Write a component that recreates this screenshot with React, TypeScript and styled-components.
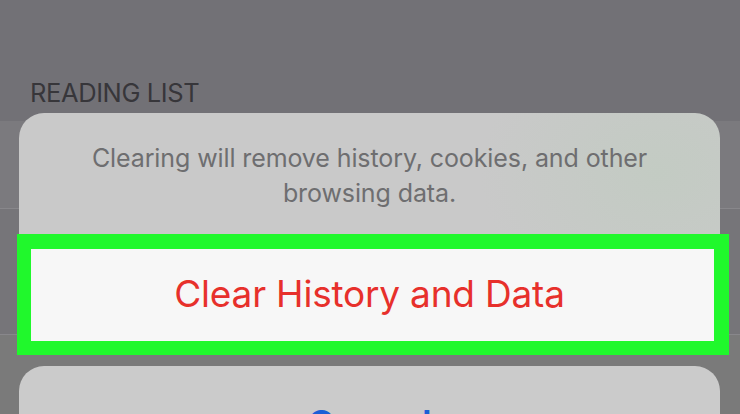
import React from "react";
import styled, { createGlobalStyle } from "styled-components";

const Global = createGlobalStyle`
  html, body { margin: 0; padding: 0; background: #727176; }
  body { font-family: Inter, Roboto, "Liberation Sans", sans-serif; }
  * { box-sizing: border-box; }
`;

const Screen = styled.div`
  position: relative;
  width: 740px;
  height: 414px;
  overflow: hidden;
  background: #727176;
`;

const SectionHeader = styled.div`
  height: 121px;
  display: flex;
  align-items: flex-end;
  padding: 0 0 13px 30px;
  font-size: 25.5px;
  letter-spacing: -0.4px;
  color: #37363a;
`;

const Cell = styled.div<{ $h: number; $bg: string }>`
  height: ${(p) => p.$h}px;
  background: ${(p) => p.$bg};
  border-bottom: 1px solid #88878b;
`;

const Sheet = styled.div`
  position: absolute;
  left: 19px;
  top: 113px;
  width: 701px;
  display: flex;
  flex-direction: column;
  gap: 11px;
`;

const Group = styled.div`
  display: flex;
  flex-direction: column;
  border-radius: 25px;
`;

const Message = styled.div`
  height: 121px;
  display: flex;
  align-items: center;
  justify-content: center;
  padding: 4px 40px 0;
  text-align: center;
  font-size: 25px;
  letter-spacing: -0.1px;
  line-height: 35px;
  color: #6e6e70;
  border-radius: 25px 25px 0 0;
  background: radial-gradient(
      ellipse 180px 140px at 640px 60px,
      rgba(190, 205, 190, 0.55),
      rgba(200, 200, 200, 0) 100%
    ),
    #c9c9c9;
`;

const MessageText = styled.span`
  max-width: 600px;
`;

const ActionButton = styled.div`
  position: relative;
  height: 121px;
  display: flex;
  align-items: center;
  justify-content: center;
  background: #f7f7f7;
  font-size: 37px;
  letter-spacing: -0.2px;
  color: #e7302b;
  padding-bottom: 2px;
`;

const Highlight = styled.div`
  position: absolute;
  top: 0;
  bottom: 0;
  left: -2px;
  right: -9px;
  border-style: solid;
  border-color: #20f82c;
  border-width: 15px 15px 14px 14px;
`;

const CancelButton = styled.div`
  height: 115px;
  display: flex;
  align-items: center;
  justify-content: center;
  background: #cbcbcb;
  border-radius: 25px;
  font-size: 37px;
  font-weight: 600;
  color: #1b5fd6;
`;

export default function App() {
  return (
    <>
      <Global />
      <Screen>
        <SectionHeader>READING LIST</SectionHeader>
        <Cell $h={88} $bg="#7b7a7e" />
        <Cell $h={126} $bg="#767579" />
        <Cell $h={120} $bg="#7a7a7a" />
        <Sheet>
          <Group>
            <Message>
              <MessageText>
                Clearing will remove history, cookies, and other browsing data.
              </MessageText>
            </Message>
            <ActionButton>
              Clear History and Data
              <Highlight />
            </ActionButton>
          </Group>
          <CancelButton>Cancel</CancelButton>
        </Sheet>
      </Screen>
    </>
  );
}
